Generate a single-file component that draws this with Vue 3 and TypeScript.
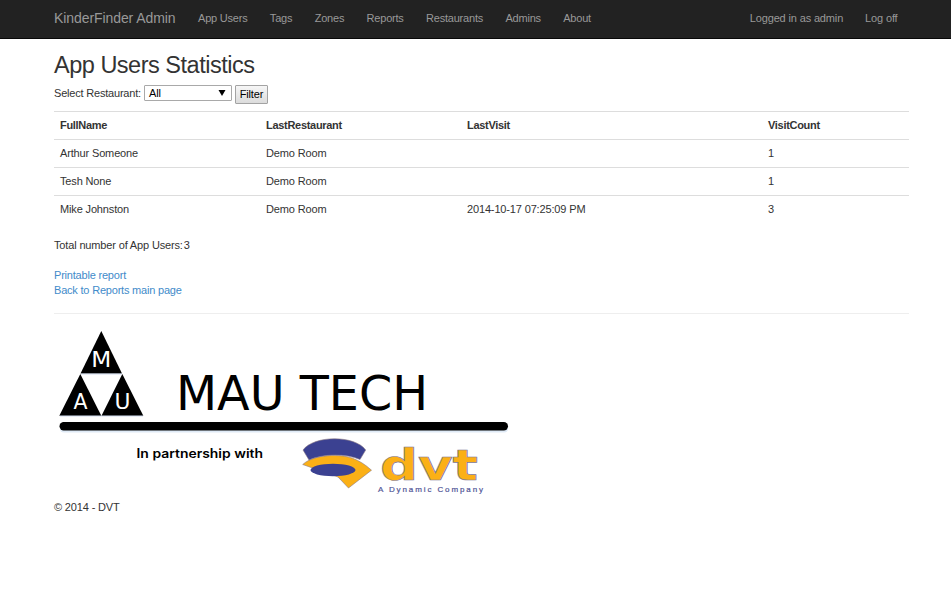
<script setup lang="ts">
import { ref } from 'vue'

interface UserRow {
  name: string
  restaurant: string
  visit: string
  count: number
}

const links: string[] = ['App Users', 'Tags', 'Zones', 'Reports', 'Restaurants', 'Admins', 'About']
const rows: UserRow[] = [
  { name: 'Arthur Someone', restaurant: 'Demo Room', visit: '', count: 1 },
  { name: 'Tesh None', restaurant: 'Demo Room', visit: '', count: 1 },
  { name: 'Mike Johnston', restaurant: 'Demo Room', visit: '2014-10-17 07:25:09 PM', count: 3 },
]
const restaurant = ref('All')
</script>

<template>
  <div class="page">
    <header class="navbar">
      <a class="brand">KinderFinder Admin</a>
      <nav class="links">
        <a v-for="l in links" :key="l">{{ l }}</a>
      </nav>
      <nav class="links account">
        <a>Logged in as admin</a>
        <a>Log off</a>
      </nav>
    </header>

    <main class="body">
      <h2>App Users Statistics</h2>
      <form class="filter" @submit.prevent>
        <label>Select Restaurant:</label>
        <div class="select" role="listbox">
          <span>{{ restaurant }}</span>
          <svg width="8" height="6" viewBox="0 0 8 6"><path d="M0.5 0H7.5L4 6Z" fill="#000" /></svg>
        </div>
        <button type="submit">Filter</button>
      </form>

      <table>
        <colgroup><col class="c1" /><col class="c2" /><col class="c3" /><col /></colgroup>
        <thead>
          <tr><th>FullName</th><th>LastRestaurant</th><th>LastVisit</th><th>VisitCount</th></tr>
        </thead>
        <tbody>
          <tr v-for="r in rows" :key="r.name">
            <td>{{ r.name }}</td><td>{{ r.restaurant }}</td><td>{{ r.visit }}</td><td>{{ r.count }}</td>
          </tr>
        </tbody>
      </table>

      <p class="total"><span>Total number of App Users:</span><span>3</span></p>
      <div class="actions">
        <a>Printable report</a>
        <a>Back to Reports main page</a>
      </div>
      <hr />

      <footer>
        <svg class="logo" width="460" height="174" viewBox="54 325 460 174">
          <g fill="#000">
            <path d="M101.3 331L122 373.5H80.5Z" />
            <path d="M80.3 374L101.3 415.7H59.3Z" />
            <path d="M122.3 374L143.3 415.7H101.5Z" />
          </g>
          <path d="M81 374H122M60 416H143" stroke="#bccbe6" stroke-width=".7" />
          <g class="dejavu" fill="#fff" font-size="20.5">
            <text x="91.3" y="366.5" textLength="20" lengthAdjust="spacingAndGlyphs">M</text>
            <text x="73.5" y="408.5" textLength="14" lengthAdjust="spacingAndGlyphs">A</text>
            <text x="114.6" y="408.5" textLength="16" lengthAdjust="spacingAndGlyphs">U</text>
          </g>
          <text class="dejavu" x="176" y="410" font-size="48" textLength="252" lengthAdjust="spacingAndGlyphs">MAU TECH</text>
          <rect x="60" y="424" width="448" height="8.5" rx="4" fill="#dfeaf6" />
          <rect x="59.5" y="422" width="448.5" height="8.5" rx="4.2" fill="#000" />
          <text class="partner" x="136.5" y="458" font-size="12.5" textLength="126.5" lengthAdjust="spacingAndGlyphs">In partnership with</text>

          <g stroke="#8b7b84" stroke-width=".6">
            <path d="M302.7 464.5C310 458 321 455.5 334 455.5C347 455.5 358 458 371.5 470.2L348.5 488L338 477Z" fill="#fbb016" />
            <path d="M303 450C314 435 355 435 365.7 450L360 459.5C346 453.5 323 453.5 309 460Z" fill="#3b4191" />
          </g>
          <ellipse cx="333" cy="470" rx="22.5" ry="6.2" fill="#3b4191" />

          <text class="dejavu wordmark" x="380" y="480" font-size="42.5" textLength="98" lengthAdjust="spacingAndGlyphs">dvt</text>
          <text class="tagline" x="378" y="491.5" font-size="8" textLength="105" lengthAdjust="spacing">A Dynamic Company</text>
        </svg>
        <p class="copy">© 2014 - DVT</p>
      </footer>
    </main>
  </div>
</template>

<style>
body {
  margin: 0;
  background: #fff;
}
</style>

<style scoped>
.page {
  min-height: 597px;
  font-family: "Liberation Sans", Arial, sans-serif;
  font-size: 11px;
  letter-spacing: -0.15px;
  line-height: 15px;
  color: #333;
}
.navbar {
  display: flex;
  align-items: center;
  box-sizing: border-box;
  height: 39px;
  padding: 0 53px 2px 54px;
  background: #222;
  border-bottom: 1px solid #080808;
  color: #999;
}
.brand {
  font-size: 14px;
  letter-spacing: -0.08px;
  width: 144px;
  white-space: nowrap;
}
.links {
  display: flex;
  gap: 22.4px;
  letter-spacing: -0.21px;
}
.account {
  margin-left: auto;
  gap: 22px;
  padding-right: 0.5px;
  letter-spacing: -0.15px;
}
.body {
  padding: 12px 42px 0 54px;
}
h2 {
  margin: 0;
  font-size: 23.5px;
  font-weight: 400;
  letter-spacing: -0.49px;
  line-height: 28px;
}
.filter {
  display: flex;
  align-items: flex-start;
  height: 26px;
  padding-top: 6px;
}
label {
  width: 90px;
  padding-top: 1px;
  letter-spacing: -0.2px;
  white-space: nowrap;
}
.select {
  display: flex;
  align-items: center;
  justify-content: space-between;
  box-sizing: border-box;
  width: 88px;
  height: 16px;
  padding: 0 5px 0 4px;
  border: 1px solid #a9a9a9;
  border-radius: 1px;
  color: #000;
}
button {
  box-sizing: border-box;
  width: 33px;
  height: 19px;
  margin: 0 0 0 3px;
  padding: 0;
  border: 1px solid #a3a3a3;
  border-radius: 1px;
  background: linear-gradient(#f6f6f6, #dcdcdc);
  font: inherit;
  letter-spacing: -0.13px;
  color: #000;
}
table {
  width: 855px;
  table-layout: fixed;
  border-collapse: separate;
  border-spacing: 0;
}
.c1 { width: 206px; }
.c2 { width: 201px; }
.c3 { width: 301px; }
th, td {
  height: 15px;
  padding: 6px;
  border-top: 1px solid #ddd;
  text-align: left;
}
th {
  letter-spacing: -0.3px;
}
.total {
  display: flex;
  gap: 1px;
  margin: 15px 0;
}
.actions {
  display: flex;
  flex-direction: column;
  letter-spacing: -0.2px;
  color: #428bca;
}
hr {
  margin: 15px 0 11px;
  border: 0;
  border-top: 1px solid #eee;
}
.logo {
  display: block;
  letter-spacing: 0;
}
.dejavu {
  font-family: "DejaVu Sans", Verdana, sans-serif;
}
.wordmark {
  font-weight: 700;
  fill: #fbb016;
  stroke: #7b7797;
  stroke-width: 0.7px;
}
.partner {
  font-family: Inter, "Open Sans", sans-serif;
  font-weight: 600;
}
.tagline {
  font-family: "Liberation Sans", Arial, sans-serif;
  fill: #4f5496;
  stroke: #4f5496;
  stroke-width: 0.2px;
}
.copy {
  margin: 1px 0 0;
}
</style>
